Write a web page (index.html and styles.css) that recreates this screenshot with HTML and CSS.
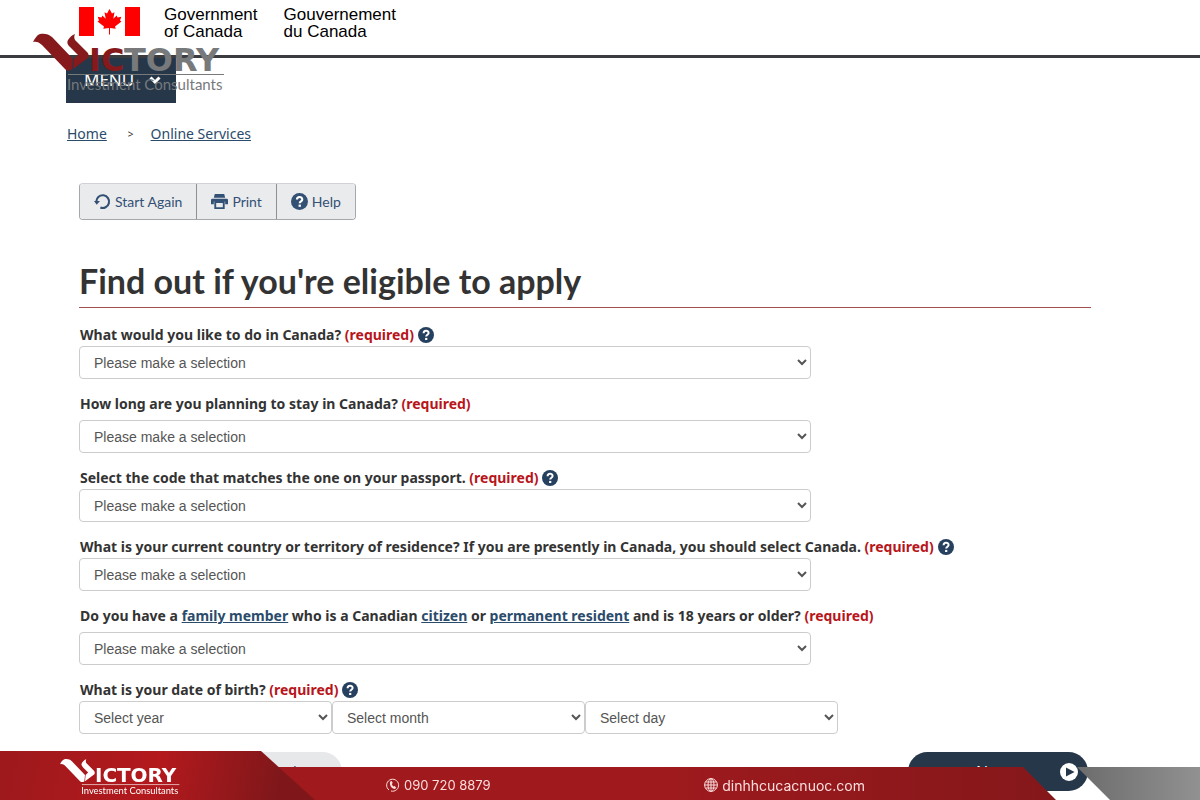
FILE: index.html
```
<!DOCTYPE html>
<html lang="en">
<head>
    <meta charset="UTF-8">
    <meta name="viewport" content="width=device-width, initial-scale=1.0">
    <title>Find out if you're eligible to apply</title>
    <link rel="stylesheet" href="styles.css">
</head>
<body>
    <!-- shared icons -->
    <svg class="sprite" aria-hidden="true">
        <symbol id="help" viewBox="0 0 16 16">
            <circle cx="8" cy="8" r="8" fill="currentColor"/>
            <path d="M5.6 6.2C5.6 3 10.6 3 10.6 6c0 1.800-2.400 1.800-2.400 3.600" fill="none" stroke="#fff" stroke-width="2"/>
            <rect x="7.1" y="10.9" width="2.2" height="2.1" fill="#fff"/>
        </symbol>
    </svg>

    <header class="header">
        <svg class="flag" viewBox="0 0 61 29" role="img" aria-label="Flag of Canada">
            <path fill="#f00" d="M0 0h15v29H0zM46 0h15v29H46z"/>
            <path fill="#f00" d="M30.500 2l2.500 4.500 2.500-1.300-1.200 6.600 3.400-3.400.8 2 3.800-.7-1.300 3.800 1.500.9-6.500 5.100.7 2.300-5.700-.7v6.400h-1v-6.400l-5.700.7.7-2.300-6.500-5.100 1.500-.9-1.300-3.800 3.800.7.8-2 3.400 3.400-1.200-6.600L28 6.500z"/>
        </svg>
        <div class="gov-name">Government<br>of Canada</div>
        <div class="gov-name" lang="fr">Gouvernement<br>du Canada</div>
    </header>

    <button type="button" class="menu-btn">MENU
        <svg class="chevron" viewBox="0 0 12 8"><path d="M1.500 1.500L6 6l4.500-4.500" fill="none" stroke="#fff" stroke-width="3"/></svg>
    </button>

    <svg class="watermark" viewBox="0 0 192 64" role="img" aria-label="Victory Investment Consultants">
        <g id="victory">
            <g class="mark">
                <path d="M0 10C2 6 4 3 7 2c4-1 9 0 12 3l21 22-1 10c-2 2-5 2-7 0L9 13c-3-3-6-4-9-3z"/>
                <path d="M41 27l4-4-8-8c-3-3-3-5-2-7 2-3 4-5 7-6-1 2-1 4 0 6l12 12c2 2 2 4 1 6L40 37z"/>
                <text x="56" y="39" class="word">IC</text>
            </g>
            <text x="91" y="39" class="word">TORY</text>
            <path d="M35 42.500h156" stroke="currentColor"/>
            <text x="34" y="58" class="tagline">Investment Consultants</text>
        </g>
    </svg>

    <nav class="breadcrumb">
        <a href="#">Home</a>
        <span>&gt;</span>
        <a href="#">Online Services</a>
    </nav>

    <main class="main">
        <div class="toolbar">
            <button type="button">
                <svg class="icon" viewBox="0 0 16 16"><path d="M2.200 8A6 6 0 1 1 6 13.700" fill="none" stroke="currentColor" stroke-width="2"/><path d="M0 7.500h5.600L2.600 11z" fill="currentColor"/></svg>
                Start Again
            </button>
            <button type="button">
                <svg class="icon" viewBox="0 0 18 16"><path d="M4 0h10l1 4H3zM1 5h16l1 1v5h-3V8H3v3H0V6z" fill="currentColor"/><path d="M4.500 8.500h9V15h-9z" fill="none" stroke="currentColor" stroke-width="2"/></svg>
                Print
            </button>
            <button type="button">
                <svg class="icon"><use href="#help"/></svg>
                Help
            </button>
        </div>

        <h1>Find out if you're eligible to apply</h1>

        <form>
            <div class="field has-help">
                <div class="label-row">
                    <label for="purpose">What would you like to do in Canada? <span class="required">(required)</span></label>
                    <button type="button" class="help" aria-label="Help"><svg><use href="#help"/></svg></button>
                </div>
                <select id="purpose"><option>Please make a selection</option></select>
            </div>
            <div class="field">
                <div class="label-row">
                    <label for="duration">How long are you planning to stay in Canada? <span class="required">(required)</span></label>
                </div>
                <select id="duration"><option>Please make a selection</option></select>
            </div>
            <div class="field has-help">
                <div class="label-row">
                    <label for="passport">Select the code that matches the one on your passport. <span class="required">(required)</span></label>
                    <button type="button" class="help" aria-label="Help"><svg><use href="#help"/></svg></button>
                </div>
                <select id="passport"><option>Please make a selection</option></select>
            </div>
            <div class="field has-help">
                <div class="label-row">
                    <label for="residence">What is your current country or territory of residence? If you are presently in Canada, you should select Canada. <span class="required">(required)</span></label>
                    <button type="button" class="help" aria-label="Help"><svg><use href="#help"/></svg></button>
                </div>
                <select id="residence"><option>Please make a selection</option></select>
            </div>
            <div class="field">
                <div class="label-row">
                    <label for="family">Do you have a <a href="#">family member</a> who is a Canadian <a href="#">citizen</a> or <a href="#">permanent resident</a> and is 18 years or older? <span class="required">(required)</span></label>
                </div>
                <select id="family"><option>Please make a selection</option></select>
            </div>
            <div class="field has-help">
                <div class="label-row">
                    <label for="year">What is your date of birth? <span class="required">(required)</span></label>
                    <button type="button" class="help" aria-label="Help"><svg><use href="#help"/></svg></button>
                </div>
                <div class="dates">
                    <select id="year"><option>Select year</option></select>
                    <select aria-label="Month"><option>Select month</option></select>
                    <select aria-label="Day"><option>Select day</option></select>
                </div>
            </div>
            <div class="actions">
                <button type="button" class="previous">Previous</button>
                <button type="submit" class="next">Next
                    <svg viewBox="0 0 18 18"><circle cx="9" cy="9" r="9" fill="#fff"/><path d="M6 4.500l8.500 4.500L6 13.500z" fill="#26374a"/></svg>
                </button>
            </div>
        </form>
    </main>

    <footer class="banner">
        <div class="bar">
            <a href="tel:0907208879" class="contact phone">
                <svg viewBox="0 0 14 14"><path d="M3 12a6 6 0 1 1 2 1" fill="none" stroke="currentColor"/><path d="M4.200 3.500l1.500-.6 1 2.200-.9.8c.3 1.100.9 2 1.800 2.700l1.100-.5 1.500 1.700-1.200 1.200C5.500 11 3 6.500 4.200 3.500z" fill="currentColor"/></svg>
                090 720 8879
            </a>
            <a href="#" class="contact site">
                <svg viewBox="0 0 14 14"><g fill="none" stroke="currentColor"><circle cx="7" cy="7" r="6.400"/><ellipse cx="7" cy="7" rx="3" ry="6.400"/><path d="M7 .6v12.800M.6 7h12.800M1.500 4h11M1.500 10h11"/></g></svg>
                dinhhcucacnuoc.com
            </a>
        </div>
        <div class="grey"></div>
        <div class="brand">
            <svg class="brand-logo" viewBox="0 0 192 64" role="img" aria-label="Victory Investment Consultants"><use href="#victory"/></svg>
        </div>
    </footer>
</body>
</html>
```
FILE: styles.css
```
* {
    box-sizing: border-box;
}
body {
    margin: 0;
    background-color: #fff;
    color: #333;
    font-family: "Noto Sans", sans-serif;
    font-size: 14px;
}
button {
    font-family: inherit;
    cursor: pointer;
}
a {
    color: #2b4b6b;
}
.sprite {
    position: absolute;
    width: 0;
    height: 0;
}

/* header */
.header {
    display: flex;
    align-items: flex-start;
    height: 58px;
    padding: 6px 79px 0;
    border-bottom: 3px solid #3b3c40;
}
.flag {
    width: 61px;
    height: 29px;
    margin: 1px 24px 0 0;
}
.gov-name {
    margin-right: 26px;
    color: #000;
    font: 17px/17px "Liberation Sans", Arial, sans-serif;
}
.menu-btn {
    display: flex;
    align-items: center;
    gap: 15px;
    height: 45px;
    margin-left: 66px;
    padding: 0 15px 2px 18px;
    border: none;
    background-color: #26374a;
    color: #fff;
    font-size: 17px;
}
.chevron {
    width: 12px;
    height: 8px;
}

/* logo */
.watermark {
    position: absolute;
    top: 32px;
    left: 33px;
    width: 192px;
    height: 64px;
    color: #77797b;
    fill: #77797b;
    pointer-events: none;
    --mark: #85191c;
}
.mark {
    fill: var(--mark);
}
.word {
    font: bold 32px "DejaVu Sans", sans-serif;
}
.tagline {
    font: 15px Lato, sans-serif;
}

.breadcrumb {
    display: flex;
    align-items: center;
    padding: 21px 67px 0;
    line-height: 20px;
}
.breadcrumb span {
    margin: 0 17px 0 21px;
    font-size: 10px;
}

.main {
    padding: 39px 109px 0 79px;
}
.toolbar {
    display: inline-flex;
    height: 37px;
    border: 1px solid #a5a8ab;
    border-top-color: #d0d2d5;
    border-radius: 4px;
    overflow: hidden;
}
.toolbar button {
    display: flex;
    align-items: center;
    gap: 4px;
    padding: 0 14px 1px;
    border: none;
    border-right: 1px solid #8d9196;
    background-color: #eaebed;
    color: #335075;
    font: 14px Lato, sans-serif;
}
.toolbar button:last-child {
    border-right: none;
}
.icon {
    width: 17px;
    height: 17px;
}
h1 {
    margin: 39px 0 16px;
    padding-bottom: 4px;
    border-bottom: 1px solid #a34f4f;
    font: bold 34px/44px Lato, sans-serif;
}

/* form */
.field {
    margin-bottom: 14px;
}
.label-row {
    display: flex;
    align-items: center;
    gap: 4px;
    margin-bottom: 5px;
    padding-left: 1px;
    font-weight: bold;
    line-height: 22px;
}
.has-help .label-row {
    margin-bottom: 0;
}
.required {
    color: #b8151b;
}
.help {
    width: 16px;
    height: 16px;
    padding: 0;
    border: none;
    border-radius: 50%;
    background: none;
    color: #26405f;
}
.help svg {
    display: block;
    width: 16px;
    height: 16px;
}
select {
    display: block;
    width: 100%;
    max-width: 732px;
    height: 33px;
    padding: 0 0 0 10px;
    border: 1px solid #ccc;
    border-radius: 4px;
    background-color: #fff;
    color: #555;
    font: 14px "Liberation Sans", Arial, sans-serif;
}
.dates {
    display: grid;
    grid-template-columns: repeat(3, 1fr);
    max-width: 759px;
}
.actions {
    display: flex;
    justify-content: space-between;
    margin-top: 18px;
    padding: 0 3px 0 83px;
}
.actions button {
    display: flex;
    align-items: center;
    width: 180px;
    height: 39px;
    border: none;
    border-radius: 20px;
    font-size: 16px;
}
.previous {
    justify-content: flex-end;
    padding: 0 18px;
    background-color: #e6e8ea;
    color: #335075;
}
.actions .next {
    justify-content: space-between;
    padding: 0 10px 0 68px;
    background-color: #26374a;
    color: #fff;
}
.next svg {
    width: 18px;
    height: 18px;
}

/* bottom banner */
.banner {
    position: fixed;
    left: 0;
    right: 0;
    bottom: 0;
    height: 49px;
}
.bar {
    position: absolute;
    left: 0;
    right: 144px;
    bottom: 0;
    display: flex;
    align-items: center;
    height: 33px;
    padding: 3px 0 0 386px;
    background: linear-gradient(90deg, #a01a1d 60%, #84171a);
    clip-path: polygon(0 0, calc(100% - 33px) 0, 100% 100%, 0 100%);
}
.contact {
    display: flex;
    align-items: center;
    gap: 4px;
    color: #fbdede;
    font: 14px Inter, sans-serif;
    text-decoration: none;
}
.phone {
    font-size: 13px;
}
.contact svg {
    width: 14px;
    height: 14px;
}
.site {
    margin-left: auto;
    margin-right: 191px;
}
.grey {
    position: absolute;
    right: 0;
    bottom: 0;
    width: 123px;
    height: 33px;
    background: linear-gradient(90deg, #6c6c6c, #919191);
    clip-path: polygon(0 0, 100% 0, 100% 100%, 33px 100%);
}
.brand {
    position: absolute;
    left: 0;
    bottom: 0;
    width: 315px;
    height: 49px;
    padding: 7px 0 0 60px;
    background: linear-gradient(100deg, #9d191c, #b3191d 50%, #7f171a 88%);
    clip-path: polygon(0 0, 261px 0, 100% 100%, 0 100%);
}
.brand-logo {
    width: 120px;
    height: 40px;
    color: #fff;
    fill: #fff;
    --mark: #fff;
}
```
